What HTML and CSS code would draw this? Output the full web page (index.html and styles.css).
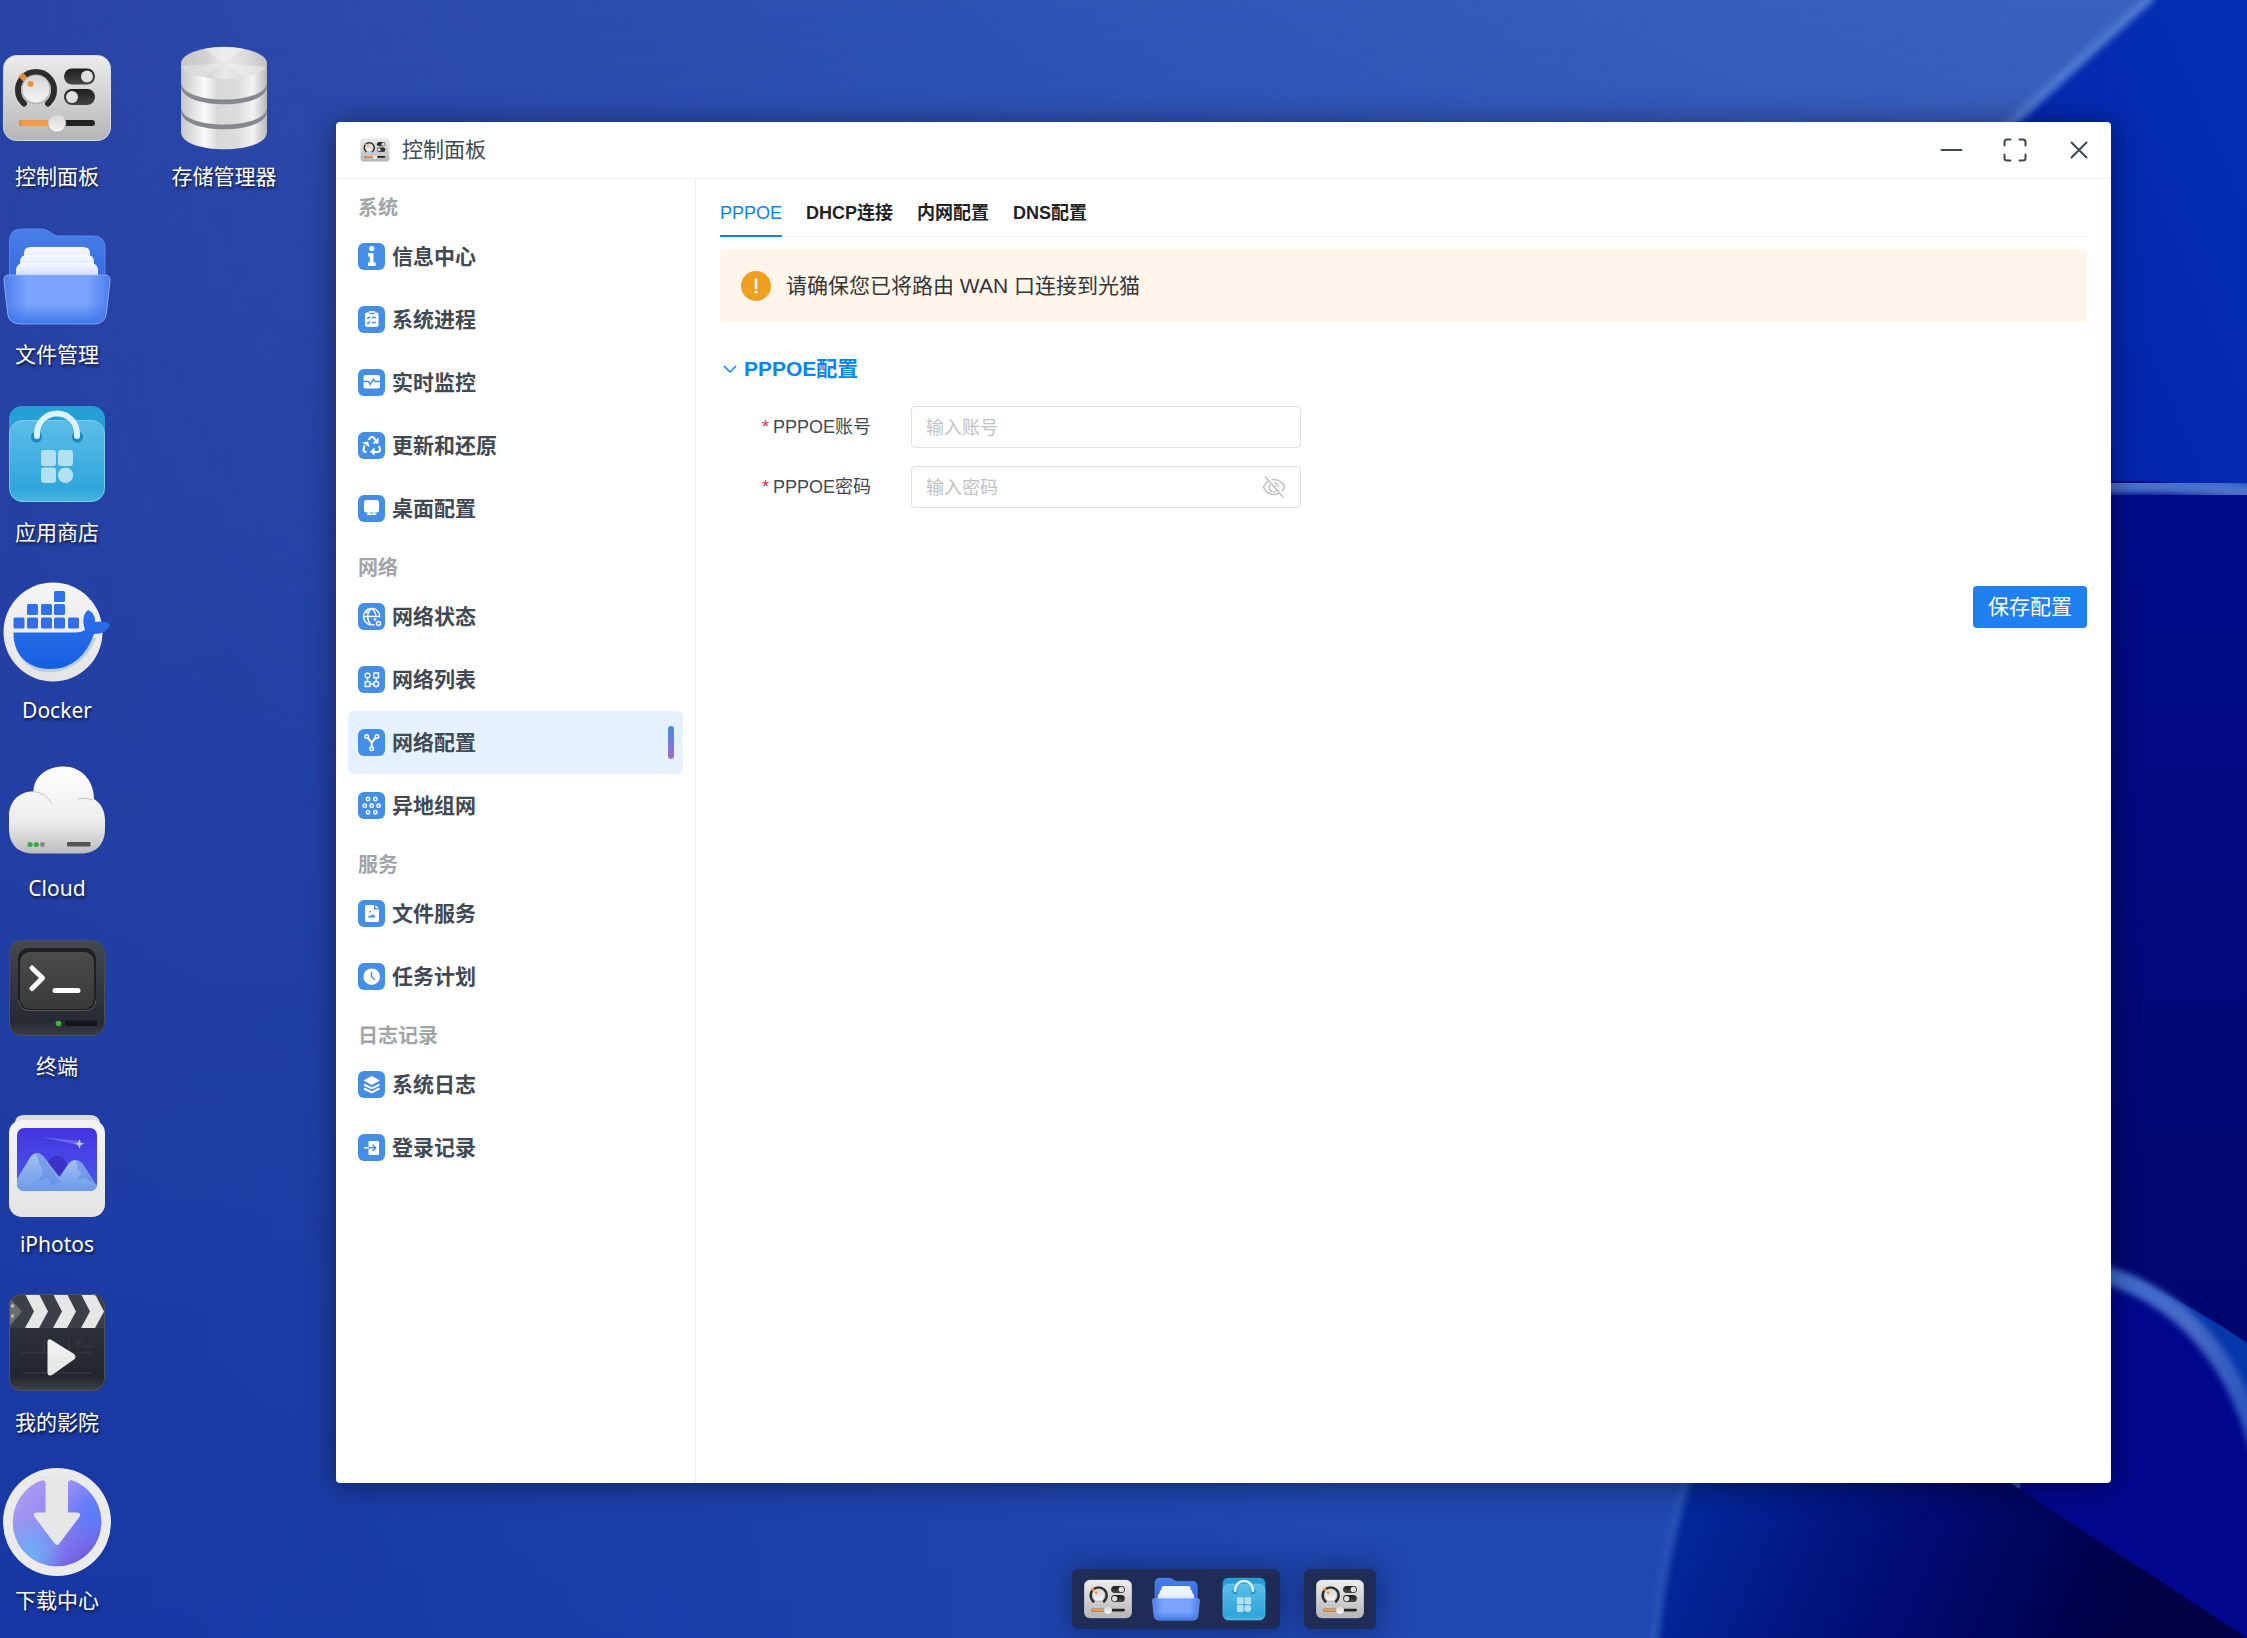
FILE: index.html
```html
<!DOCTYPE html>
<html lang="zh-CN">
<head>
<meta charset="utf-8">
<meta name="viewport" content="width=device-width, initial-scale=1">
<title>控制面板</title>
<link rel="stylesheet" href="styles.css">
</head>
<body>

<svg class="sprite" aria-hidden="true" width="0" height="0">
  <defs>
    <linearGradient id="gSilver" x1="0" y1="0" x2="0" y2="1"><stop offset="0" stop-color="#ececec"/><stop offset=".75" stop-color="#c4c4c4"/><stop offset="1" stop-color="#b4b4b4"/></linearGradient>
    <linearGradient id="gKnob" x1="0" y1="0" x2="0" y2="1"><stop offset="0" stop-color="#d6d6d6"/><stop offset="1" stop-color="#f4f4f4"/></linearGradient>
    <linearGradient id="gDark" x1="0" y1="0" x2="0" y2="1"><stop offset="0" stop-color="#1e1e1e"/><stop offset="1" stop-color="#454545"/></linearGradient>
    <linearGradient id="gDisk" x1="0" y1="0" x2="1" y2="0"><stop offset="0" stop-color="#c6c6c8"/><stop offset=".28" stop-color="#fbfbfb"/><stop offset=".42" stop-color="#d9d9d9"/><stop offset=".65" stop-color="#dcdcde"/><stop offset=".84" stop-color="#f2f2f2"/><stop offset="1" stop-color="#b8b8ba"/></linearGradient>
    <linearGradient id="gDiskTop" x1="0" y1="0" x2="1" y2="0"><stop offset="0" stop-color="#c6c6c6"/><stop offset=".3" stop-color="#d2d2d2"/><stop offset=".5" stop-color="#e9e9e9"/><stop offset=".75" stop-color="#dcdcdc"/><stop offset="1" stop-color="#c2c2c2"/></linearGradient>
    <linearGradient id="gFolderBack" x1="0" y1="0" x2="0" y2="1"><stop offset="0" stop-color="#4a7fe8"/><stop offset="1" stop-color="#2a62dc"/></linearGradient>
    <linearGradient id="gFolderFront" x1="0" y1="0" x2="0" y2="1"><stop offset="0" stop-color="#7ba4fc"/><stop offset=".6" stop-color="#7aa4fd"/><stop offset="1" stop-color="#3f78ee"/></linearGradient>
    <linearGradient id="gFolderSide" x1="0" y1="0" x2="1" y2="0"><stop offset="0" stop-color="#3f74e8" stop-opacity=".8"/><stop offset=".22" stop-color="#3f74e8" stop-opacity="0"/><stop offset=".78" stop-color="#3f74e8" stop-opacity="0"/><stop offset="1" stop-color="#3f74e8" stop-opacity=".8"/></linearGradient>
    <linearGradient id="gPaper" x1="0" y1="0" x2="0" y2="1"><stop offset="0" stop-color="#f7faff"/><stop offset="1" stop-color="#b9cdf8"/></linearGradient>
    <linearGradient id="gBag" x1="0" y1="0" x2="0" y2="1"><stop offset="0" stop-color="#5cbde8"/><stop offset=".85" stop-color="#2ea6dc"/><stop offset="1" stop-color="#4ab6de"/></linearGradient>
    <linearGradient id="gWhite" x1="0" y1="0" x2="0" y2="1"><stop offset="0" stop-color="#f4f4f4"/><stop offset="1" stop-color="#e4e4e4"/></linearGradient>
    <linearGradient id="gWhale" x1="0" y1="0" x2="0" y2="1"><stop offset="0" stop-color="#2f70ee"/><stop offset="1" stop-color="#1560e0"/></linearGradient>
    <linearGradient id="gCloud" x1="0" y1="0" x2="0" y2="1"><stop offset="0" stop-color="#ffffff"/><stop offset=".65" stop-color="#ececec"/><stop offset="1" stop-color="#bcbcbc"/></linearGradient>
    <linearGradient id="gTerm" x1="0" y1="0" x2="0" y2="1"><stop offset="0" stop-color="#45484f"/><stop offset=".85" stop-color="#262a33"/><stop offset="1" stop-color="#3a3c42"/></linearGradient>
    <linearGradient id="gScreen" x1="0" y1="0" x2="0" y2="1"><stop offset="0" stop-color="#4b4b4b"/><stop offset="1" stop-color="#393939"/></linearGradient>
    <linearGradient id="gSky" x1="0" y1="0" x2="0" y2="1"><stop offset="0" stop-color="#4433df"/><stop offset="1" stop-color="#4a5bea"/></linearGradient>
    <linearGradient id="gPeak" x1="0" y1="0" x2="0" y2="1"><stop offset="0" stop-color="#a3c1f5"/><stop offset="1" stop-color="#6b98e8"/></linearGradient>
    <linearGradient id="gClap" x1="0" y1="0" x2="0" y2="1"><stop offset="0" stop-color="#32363f"/><stop offset=".85" stop-color="#22262f"/><stop offset="1" stop-color="#40434a"/></linearGradient>
    <linearGradient id="gDown" x1="0" y1="0" x2="1" y2="1"><stop offset="0" stop-color="#b7a0ef"/><stop offset=".5" stop-color="#8c88f4"/><stop offset="1" stop-color="#6450dc"/></linearGradient>
    <radialGradient id="gDownA" cx=".2" cy=".85" r=".4"><stop offset="0" stop-color="#6cb0f4"/><stop offset="1" stop-color="#6cb0f4" stop-opacity="0"/></radialGradient>
    <radialGradient id="gDownB" cx=".9" cy=".4" r=".4"><stop offset="0" stop-color="#5a7bfc"/><stop offset="1" stop-color="#5a7bfc" stop-opacity="0"/></radialGradient>
    <clipPath id="clipPic"><rect x="14" y="16" width="80" height="63" rx="7"/></clipPath>
    <clipPath id="clipMovie"><rect x="6" y="4" width="96" height="97" rx="12"/></clipPath>
  </defs>

  <symbol id="app-panel" viewBox="0 0 108 108">
    <rect x=".5" y="11.500" width="107" height="85" rx="13" fill="url(#gSilver)" stroke="#d8d8d8"/>
    <path d="M21 59.500A18 18 0 1 1 45 59.500" fill="none" stroke="#2d2d2d" stroke-width="6" stroke-linecap="round"/>
    <path d="M17.500 30.500l5 5" stroke="#ea8c3c" stroke-width="6"/>
    <circle cx="33" cy="45.500" r="15" fill="#b5b5b5"/><circle cx="33" cy="45" r="13.500" fill="url(#gKnob)"/>
    <circle cx="27.500" cy="40" r="3" fill="#ee8f3c"/>
    <rect x="61" y="24.500" width="31" height="16" rx="8" fill="url(#gDark)"/><rect x="61" y="45" width="31" height="16" rx="8" fill="url(#gDark)"/>
    <circle cx="84" cy="32.500" r="6" fill="#e0e0e0"/><circle cx="69" cy="53" r="6" fill="#e0e0e0"/>
    <rect x="16" y="76" width="76" height="6" rx="3" fill="#222"/><rect x="16" y="76" width="36" height="6" rx="3" fill="#f09a4c"/>
    <circle cx="54" cy="79.500" r="9.500" fill="#aaa" opacity=".6"/><circle cx="54" cy="79" r="8.700" fill="url(#gKnob)"/>
  </symbol>

  <symbol id="app-storage" viewBox="0 0 108 108">
    <path d="M11 19v69c0 23 86 23 86 0V19z" fill="url(#gDisk)"/>
    <path d="M11 39c2 22 84 22 86 0v4c-2 23-84 23-86 0zM11 64c2 22 84 22 86 0v4c-2 23-84 23-86 0z" fill="#85888f"/>
    <ellipse cx="54" cy="19" rx="43" ry="16" fill="url(#gDiskTop)"/>
    <path d="M54 19L34 4.800a43 16 0 0 1 40 0z" fill="#f0f0f0" opacity=".6"/><path d="M54 19L11.500 22A43 16 0 0 0 34 33z" fill="#ececec" opacity=".5"/><path d="M54 19L74 33A43 16 0 0 0 96 23z" fill="#f4f4f4" opacity=".5"/>
  </symbol>

  <symbol id="app-folder" viewBox="0 0 108 108">
    <path d="M6.500 19Q6.500 7 18 7H38c9 0 11 7 18 7H90q12 0 12 12V80H6.500z" fill="url(#gFolderBack)" stroke="#5b86e4"/>
    <path d="M21 31q0-6 7-6H80q7 0 7 6V60H21z" fill="url(#gPaper)"/>
    <path d="M17 40q0-7 7-7H84q7 0 7 7V60H17z" fill="url(#gPaper)"/>
    <path d="M13 49q0-8 8-8H87q8 0 8 8V62H13z" fill="url(#gPaper)"/>
    <path d="M1 59Q0 53 6 53H101q7 0 6 6L103.500 91Q102 102 91 102H17Q6 102 4.500 91z" fill="url(#gFolderFront)"/>
    <path d="M1 59Q0 53 6 53H101q7 0 6 6L103.500 91Q102 102 91 102H17Q6 102 4.500 91z" fill="url(#gFolderSide)" stroke="#a3bdf8" stroke-opacity=".7"/>
  </symbol>

  <symbol id="app-store" viewBox="0 0 108 108">
    <rect x="6" y="6" width="96" height="60" rx="13" fill="#259fd6"/>
    <rect x="6.500" y="20.500" width="95" height="81" rx="13" fill="url(#gBag)" stroke="#7ccbec"/>
    <circle cx="33.500" cy="37" r="5.500" fill="#1787bd"/><circle cx="74.500" cy="37" r="5.500" fill="#1787bd"/>
    <path d="M34 37V34a20 20 0 0 1 40 0v3" fill="none" stroke="#1f8fc4" stroke-width="7" stroke-linecap="round" opacity=".5"/>
    <path d="M34 36V33.500a20 20 0 0 1 40 0V36" fill="none" stroke="#dcf3fc" stroke-width="6" stroke-linecap="round"/>
    <g fill="#b3e0f3"><rect x="38" y="50" width="15" height="16" rx="3"/><rect x="55" y="50" width="15" height="16" rx="3"/><rect x="38" y="67.500" width="15" height="15.500" rx="3"/><circle cx="62.500" cy="75.300" r="7.700"/></g>
  </symbol>

  <symbol id="app-docker" viewBox="0 0 108 108">
    <circle cx="50" cy="54" r="49.500" fill="url(#gWhite)"/>
    <path d="M12 60C14 84 30 96 50 94 72 92 86 78 93 60z" fill="#8fb4f4" opacity=".5"/>
    <path d="M10.500 54.500H72q6 0 10-2.500C79 43 80 36 85 32 90 34 92.500 39 92 44 97 43 102 43 107 46 105 53 99 56 91 56 83 78 69 91 47 91 24 91 10 76 10.500 54.500z" fill="url(#gWhale)"/>
    <g fill="#2f6feb"><rect x="51" y="13" width="11" height="11" rx="1.500"/><rect x="24" y="26" width="11" height="11" rx="1.500"/><rect x="38" y="26" width="11" height="11" rx="1.500"/><rect x="51" y="26" width="11" height="11" rx="1.500"/><rect x="10.500" y="39.500" width="11" height="11" rx="1.500"/><rect x="24" y="39.500" width="11" height="11" rx="1.500"/><rect x="38" y="39.500" width="11" height="11" rx="1.500"/><rect x="51" y="39.500" width="11" height="11" rx="1.500"/><rect x="65" y="39.500" width="11" height="11" rx="1.500"/></g>
  </symbol>

  <symbol id="app-cloud" viewBox="0 0 108 108">
    <path d="M30.500 35.500C31 20 44 10.500 60.500 10.500 78 10.500 91 24 91 43c7 4 11 12 11 21v9c0 15-9 24.500-24 24.500H30C15 97.500 6 88 6 73V60c0-14 10-25 24.500-24.500z" fill="url(#gCloud)"/>
    <path d="M30 35.500q13 1 18.500 12M75 43q8-2 15 1" fill="none" stroke="#c4c4c4"/>
    <circle cx="27" cy="88.500" r="2.600" fill="#3aae42"/><circle cx="33.200" cy="88.500" r="2.600" fill="#3aae42"/><circle cx="39.400" cy="88.500" r="2.400" fill="#888"/>
    <rect x="64" y="86" width="23.500" height="4.500" rx="1" fill="#555"/>
  </symbol>

  <symbol id="app-terminal" viewBox="0 0 108 108">
    <rect x="6.500" y="6.500" width="95" height="95" rx="12" fill="url(#gTerm)" stroke="#4c4e54"/>
    <rect x="15" y="14" width="78" height="62" rx="11" fill="#1f1f1f"/><rect x="17" y="18" width="74" height="57" rx="10" fill="url(#gScreen)"/>
    <path d="M15.500 66q1 10.500 11 10.500H82q10 0 11-10.500" fill="none" stroke="#5a5a5a"/>
    <path d="M29 34l10.500 10L29 54.500M52 56.500H75" fill="none" stroke="#fff" stroke-width="5" stroke-linecap="round" stroke-linejoin="round"/>
    <circle cx="55.500" cy="89.500" r="2.800" fill="#3fb73f"/><rect x="62" y="86.500" width="32" height="5.500" rx="1.500" fill="#12151c"/>
  </symbol>

  <symbol id="app-photos" viewBox="0 0 108 108">
    <path d="M12 10q1-7 9-7H87q8 0 10 7l-4 6H16z" fill="#dcdcdc"/>
    <rect x="6" y="8" width="96" height="97" rx="13" fill="url(#gWhite)"/>
    <g clip-path="url(#clipPic)"><rect x="14" y="16" width="80" height="63" fill="url(#gSky)"/><circle cx="54" cy="54" r="10" fill="#3c30c8"/><path d="M38 25l38 4v4z" fill="#8b82f2" opacity=".6"/>
    <path d="M76.500 27l1.300 3.700 3.700 1-3.700 1.300-1.300 3.700-1.300-3.700-3.700-1.300 3.700-1z" fill="#c9c6ff"/>
    <path d="M46 80L66 51q6-6 13 0L98 80z" fill="url(#gPeak)"/><path d="M6 80L28 44q6-6 12 0L68 80z" fill="url(#gPeak)"/><path d="M34 41c-2 5 4 8 2 12 4 0 2 5 4 8l-5 8 9-3 4 7 9-3L40 44q-3-3-6-3zM73 48c-1 4 3 6 1 9l4 4-3 7 7-2 10 6L79 51q-3-3-6-3z" fill="#5a86df" opacity=".5"/></g>
  </symbol>

  <symbol id="app-movie" viewBox="0 0 108 108">
    <g clip-path="url(#clipMovie)"><rect x="6" y="4" width="96" height="97" fill="url(#gClap)"/><rect x="6" y="4" width="96" height="34" fill="#3b3f48"/>
    <path d="M22 4H36L45 21.500 36 38H22L31 21.500zM50 4H64L73 21.500 64 38H50L59 21.500zM78 4H92L101 21.500 92 38H78L87 21.500z" fill="#e6e6e6"/><path d="M6 7L19 21.500 6 37z" fill="#6d6d6d"/><circle cx="9.500" cy="16" r="1.700" fill="#bbb"/><circle cx="9.500" cy="26" r="1.700" fill="#bbb"/></g>
    <path d="M19 63H88M19 83H88M41 49V63M66 49V63M72 52h8M76 52l-2 8M80 57q3-3 4 1 3-4 5-1" fill="none" stroke="#3a3f4b"/>
    <rect x="6.500" y="4.500" width="95" height="96" rx="12" fill="none" stroke="#50535b"/>
    <path d="M44.500 52q0-4 4-2L71 64q3 3 0 5.500L49 85q-4.500 2-4.500-3z" fill="url(#gWhite)"/>
  </symbol>

  <symbol id="app-download" viewBox="0 0 108 108">
    <circle cx="54" cy="54" r="54" fill="#ebebeb"/>
    <circle cx="54" cy="54" r="44.300" fill="url(#gDown)"/><circle cx="54" cy="54" r="44.300" fill="url(#gDownA)"/><circle cx="54" cy="54" r="44.300" fill="url(#gDownB)"/>
    <path d="M36 8H72L65 14V44.500H74q5 .5 2 5L56 76q-2 2-4 0L32 49.500q-3-4.500 2-5h8.500V14z" fill="#e6e6e6"/>
  </symbol>
</svg>

<svg class="wallpaper" viewBox="0 0 2247 1638" preserveAspectRatio="none" aria-hidden="true">
  <defs>
    <linearGradient id="wBase" x1="0" y1="0" x2="0" y2="1"><stop offset="0" stop-color="#2a44a5"/><stop offset=".5" stop-color="#233fa4"/><stop offset="1" stop-color="#1637a3"/></linearGradient>
    <linearGradient id="wLight" x1="0" y1="0" x2="1" y2="0"><stop offset="0" stop-color="#3b60bd" stop-opacity="0"/><stop offset=".9" stop-color="#3b60bd"/></linearGradient>
    <linearGradient id="wMid" x1="0" y1="0" x2="1" y2="0"><stop offset="0" stop-color="#2048b1" stop-opacity="0"/><stop offset=".1" stop-color="#2048b1" stop-opacity=".1"/><stop offset=".6" stop-color="#2048b1"/></linearGradient>
    <linearGradient id="wFade" x1="0" y1="0" x2="0" y2="1"><stop offset="0" stop-color="#fff"/><stop offset=".5" stop-color="#000"/></linearGradient>
    <mask id="wTop"><rect width="2247" height="1638" fill="url(#wFade)"/></mask>
    <linearGradient id="wBlob" x1="0" y1="1" x2="1" y2="0"><stop offset="0" stop-color="#001ba8"/><stop offset="1" stop-color="#0530b4"/></linearGradient>
    <linearGradient id="wDeep" x1="0" y1="0" x2="0" y2="1"><stop offset="0" stop-color="#000b8b"/><stop offset="1" stop-color="#00066a"/></linearGradient>
    <linearGradient id="wFoot" gradientUnits="userSpaceOnUse" x1="1670" y1="1460" x2="2110" y2="1640"><stop offset="0" stop-color="#042c9f"/><stop offset=".55" stop-color="#000a72"/><stop offset="1" stop-color="#000045"/></linearGradient>
    <linearGradient id="wEdge" gradientUnits="userSpaceOnUse" x1="2111" y1="0" x2="2247" y2="0"><stop offset="0" stop-color="#3f6cd0"/><stop offset=".6" stop-color="#4769c6"/><stop offset="1" stop-color="#2a57bd"/></linearGradient>
    <filter id="soft" x="-10%" y="-10%" width="120%" height="120%"><feGaussianBlur stdDeviation="3"/></filter>
  </defs>
  <rect width="2247" height="1638" fill="url(#wBase)"/>
  <rect width="2247" height="1638" fill="url(#wMid)"/>
  <rect width="2247" height="1638" fill="url(#wLight)" mask="url(#wTop)"/>
  <path d="M2150 0Q2075 66 2008 126L1900 300V800H2247V0z" fill="url(#wBlob)"/>
  <path d="M2152-4Q2078 62 2006 128" fill="none" stroke="#4d78cf" stroke-width="10" filter="url(#soft)"/>
  <path d="M2000 490Q2150 470 2247 494V1400H2000z" fill="url(#wDeep)"/>
  <path d="M2050 488Q2170 478 2260 494" fill="none" stroke="#4a71ca" stroke-width="18" filter="url(#soft)"/>
  <path d="M2100 1268Q2170 1290 2247 1343V1450L2100 1300z" fill="#0637ab"/>
  <path d="M2050 1260Q2220 1290 2260 1460V1638H2000z" fill="#00078b"/>
  <path d="M2080 1268Q2216 1296 2258 1446" fill="none" stroke="url(#wEdge)" stroke-width="18" filter="url(#soft)"/>
  <path d="M1694 1460H1975L2247 1638H1655Q1660 1560 1694 1460z" fill="url(#wFoot)"/>
  <path d="M1690 1470Q1662 1555 1654 1645" fill="none" stroke="#2852b5" stroke-width="9" filter="url(#soft)"/>
</svg>

<main class="desktop">
  <nav class="shortcuts" aria-label="桌面">
    <a class="shortcut" href="#panel"><svg class="shortcut-icon"><use href="#app-panel"/></svg><span>控制面板</span></a>
    <a class="shortcut" href="#files"><svg class="shortcut-icon"><use href="#app-folder"/></svg><span>文件管理</span></a>
    <a class="shortcut" href="#store"><svg class="shortcut-icon"><use href="#app-store"/></svg><span>应用商店</span></a>
    <a class="shortcut" href="#docker"><svg class="shortcut-icon"><use href="#app-docker"/></svg><span>Docker</span></a>
    <a class="shortcut" href="#cloud"><svg class="shortcut-icon"><use href="#app-cloud"/></svg><span>Cloud</span></a>
    <a class="shortcut" href="#terminal"><svg class="shortcut-icon"><use href="#app-terminal"/></svg><span>终端</span></a>
    <a class="shortcut" href="#photos"><svg class="shortcut-icon"><use href="#app-photos"/></svg><span>iPhotos</span></a>
    <a class="shortcut" href="#movies"><svg class="shortcut-icon"><use href="#app-movie"/></svg><span>我的影院</span></a>
    <a class="shortcut" href="#downloads"><svg class="shortcut-icon"><use href="#app-download"/></svg><span>下载中心</span></a>
    <a class="shortcut" href="#storage"><svg class="shortcut-icon"><use href="#app-storage"/></svg><span>存储管理器</span></a>
  </nav>

  <section class="window" id="panel" aria-label="控制面板">
    <header class="titlebar">
      <svg class="title-icon" viewBox="0 10 108 88"><use href="#app-panel" width="108" height="108"/></svg>
      <h1 class="title">控制面板</h1>
      <div class="window-controls">
        <button type="button" aria-label="最小化"><svg viewBox="0 0 24 24"><path d="M2.500 12H22.500"/></svg></button>
        <button type="button" aria-label="最大化"><svg viewBox="0 0 24 24"><path d="M1.500 7.500V4Q1.500 1.500 4 1.500H7.500M16.500 1.500H20Q22.500 1.500 22.500 4V7.500M22.500 16.500V20Q22.500 22.500 20 22.500H16.500M7.500 22.500H4Q1.500 22.500 1.500 20V16.500"/></svg></button>
        <button type="button" aria-label="关闭"><svg viewBox="0 0 24 24"><path d="M4.500 4.500l15 15M19.500 4.500l-15 15"/></svg></button>
      </div>
    </header>

    <div class="window-body">
      <nav class="sidebar" aria-label="设置">
        <h2 class="group-title">系统</h2>
        <a class="item" href="#info"><svg class="item-icon" viewBox="0 0 27 27"><circle cx="13.700" cy="5.500" r="2.600"/><path d="M10.200 10h5.300v9.500h2.200V23H10v-3.500h1.800v-6H10.200z"/></svg>信息中心</a>
        <a class="item" href="#process"><svg class="item-icon" viewBox="0 0 27 27"><path d="M9 6.500h2V5h6v1.500h1.500Q20.500 6.500 20.500 8.500V19q0 2-2 2H9q-2 0-2-2V8.500q0-2 2-2z"/><path class="cut" d="M11.500 7.500h5M9 11.500l1 1 1.800-2M14 11.500h4M9 16.500l1 1 1.800-2M14 16.500h4"/></svg>系统进程</a>
        <a class="item" href="#monitor"><svg class="item-icon" viewBox="0 0 27 27"><rect x="5.500" y="6" width="16.500" height="13.500" rx="2"/><path class="cut" d="M5 12.500h5.500l1.500 3 3.500-5.500 1.500 2.500H22"/></svg>实时监控</a>
        <a class="item" href="#update"><svg class="item-icon" viewBox="0 0 27 27"><path class="line bold" d="M10.500 8l2-2.500q1.500-1 3 0L18 9M6.500 13.500l-1 4q0 2.500 3 2.500M21 14l1 3q.5 3-3 3h-4"/><path d="M20.500 5.500v6h-6zM4 10.500l6-1 1.500 5.500zM16.500 15.500v8l-4.500-3.700z"/></svg>更新和还原</a>
        <a class="item" href="#desktop"><svg class="item-icon" viewBox="0 0 27 27"><rect x="6" y="5" width="15" height="12.500" rx="2.500"/><path class="line" d="M11 17v2.500M16 17v2.500M9 19.300h9.500"/></svg>桌面配置</a>

        <h2 class="group-title">网络</h2>
        <a class="item" href="#net-status"><svg class="item-icon" viewBox="0 0 27 27"><path class="line" d="M16.500 21.300A8.200 8.200 0 1 1 21.800 14M5.500 13.500H22M13.500 5.500c-6 5-4 13-.5 16.300M13.500 5.500c4 3 4.500 6 4.500 8.500"/><circle class="line" cx="20.500" cy="20.500" r="2"/><circle cx="17" cy="16.500" r="1.300"/><circle cx="8.500" cy="9" r="1.300"/></svg>网络状态</a>
        <a class="item" href="#net-list"><svg class="item-icon" viewBox="0 0 27 27"><circle class="line" cx="9.500" cy="9.500" r="2.400"/><rect class="line" x="15.800" y="7" width="4.700" height="4.700"/><rect class="line" x="7.200" y="15.800" width="4.700" height="4.700"/><circle class="line" cx="18.200" cy="18" r="2.500"/><path class="line" d="M9.500 12v4M18.200 12v3.500M12 18h3.500"/></svg>网络列表</a>
        <a class="item active" href="#net-config" aria-current="page"><svg class="item-icon" viewBox="0 0 27 27"><path class="line bold" d="M9.800 9l4 4.500 3.700-4.500M13.700 13v5"/><circle class="line" cx="8.700" cy="7.500" r="1.800"/><circle class="line" cx="19" cy="7.500" r="1.800"/><circle class="line" cx="13.700" cy="19.800" r="1.800"/></svg>网络配置</a>
        <a class="item" href="#vpn"><svg class="item-icon" viewBox="0 0 27 27"><g class="line"><circle cx="10" cy="7" r="1.700"/><circle cx="17.300" cy="7" r="1.700"/><circle cx="6.800" cy="13.700" r="1.700"/><circle cx="13.700" cy="13.700" r="1.700"/><circle cx="20.500" cy="13.700" r="1.700"/><circle cx="10" cy="20.300" r="1.700"/><circle cx="17.300" cy="20.300" r="1.700"/></g></svg>异地组网</a>

        <h2 class="group-title">服务</h2>
        <a class="item" href="#file-service"><svg class="item-icon" viewBox="0 0 27 27"><path d="M8.500 5H16v4.500h5V20.500Q21 22 19.500 22H8.500Q7 22 7 20.500V6.500Q7 5 8.500 5zM17.500 5L21 8.300H17.500z"/><path class="hole" d="M10 17.500q1-3 3-1.500 2-4 4.500 1.500zM11.500 11h1.500v1.500h-1.500z"/></svg>文件服务</a>
        <a class="item" href="#schedule"><svg class="item-icon" viewBox="0 0 27 27"><circle cx="13.700" cy="13.700" r="8.300"/><path class="cut" d="M13.500 9v4.700l3.500 3"/></svg>任务计划</a>

        <h2 class="group-title">日志记录</h2>
        <a class="item" href="#system-log"><svg class="item-icon" viewBox="0 0 27 27"><path d="M13.700 5L22 9.500 13.700 14 5.500 9.500z"/><path class="line bold" d="M6 13.700l7.700 3.800 7.800-3.800M6 17.500l7.700 3.800 7.800-3.800"/></svg>系统日志</a>
        <a class="item" href="#login-log"><svg class="item-icon" viewBox="0 0 27 27"><rect x="10.500" y="7" width="10.500" height="14" rx="1"/><path class="line" d="M6 13.700h5"/><path class="cut" d="M10.500 13.700h7M14.500 10.500l3.200 3.200-3.200 3.200"/></svg>登录记录</a>
      </nav>

      <div class="content">
        <div class="tabs" role="tablist">
          <button class="tab selected" type="button" role="tab" aria-selected="true">PPPOE</button>
          <button class="tab" type="button" role="tab" aria-selected="false">DHCP连接</button>
          <button class="tab" type="button" role="tab" aria-selected="false">内网配置</button>
          <button class="tab" type="button" role="tab" aria-selected="false">DNS配置</button>
        </div>

        <div class="alert" role="alert">
          <svg viewBox="0 0 30 30" aria-hidden="true"><circle cx="15" cy="15" r="15" fill="#f0a020"/><path d="M15 8.500v8.500" stroke="#fff" stroke-width="2.500" stroke-linecap="round"/><circle cx="15" cy="21" r="1.600" fill="#fff"/></svg>
          <p>请确保您已将路由 WAN 口连接到光猫</p>
        </div>

        <form class="config">
          <button class="collapse" type="button" aria-expanded="true"><svg viewBox="0 0 14 14" aria-hidden="true"><path d="M1 4l6 6 6-6"/></svg>PPPOE配置</button>
          <div class="fields">
            <label for="account"><span class="required">*</span>PPPOE账号</label>
            <div class="field"><input id="account" type="text" placeholder="输入账号"></div>
            <label for="password"><span class="required">*</span>PPPOE密码</label>
            <div class="field"><input id="password" type="password" placeholder="输入密码"><button class="eye" type="button" aria-label="显示密码"><svg viewBox="0 0 24 24"><path d="M6.500 6.200C3.500 8 2 10.300 1.500 12c1 3.500 5 7.500 10.500 7.500 2 0 3.700-.5 5.200-1.300M9.500 4.800C10.300 4.600 11 4.500 12 4.500c5.500 0 9.500 4 10.500 7.500-.4 1.400-1.300 3-2.800 4.400M8.500 9.500a4.200 4.200 0 0 0 6 6M12 7.800a4.200 4.200 0 0 1 4.200 4.200M12.500 10.500q1 .3 1.200 1.200M3 1.500L21.500 22.500"/></svg></button></div>
          </div>
          <button class="save" type="submit">保存配置</button>
        </form>
      </div>
    </div>
  </section>

  <footer class="dock">
    <div class="dock-group">
      <button type="button" aria-label="控制面板"><svg><use href="#app-panel"/></svg></button>
      <button type="button" aria-label="文件管理"><svg><use href="#app-folder"/></svg></button>
      <button type="button" aria-label="应用商店"><svg><use href="#app-store"/></svg></button>
    </div>
    <div class="dock-group">
      <button type="button" aria-label="控制面板"><svg><use href="#app-panel"/></svg></button>
    </div>
  </footer>
</main>
</body>
</html>
```

FILE: styles.css
```css
* {
  box-sizing: border-box;
}

body {
  margin: 0;
  height: 100vh;
  overflow: hidden;
  background: #213da4;
  font-family: "Liberation Sans", "Noto Sans CJK SC", sans-serif;
  line-height: 1.5;
  color: #404954;
}

h1,
h2,
p {
  margin: 0;
}

button {
  margin: 0;
  padding: 0;
  border: 0;
  background: none;
  color: inherit;
  font: inherit;
  cursor: pointer;
}

a {
  color: inherit;
  text-decoration: none;
}

svg {
  display: block;
  flex: none;
}

.sprite {
  position: absolute;
}

.wallpaper {
  position: absolute;
  inset: 0;
  width: 100%;
  height: 100%;
}

.desktop {
  position: relative;
  height: 100%;
}

/* Desktop shortcuts fill a column, then wrap to the next one */
.shortcuts {
  display: flex;
  flex-flow: column wrap;
  align-content: flex-start;
  gap: 31px 53px;
  height: 100%;
  padding-top: 44px;
}

.shortcut {
  display: flex;
  flex-direction: column;
  align-items: center;
  gap: 9px;
  width: 114px;
  color: #fff;
  font: 21px/30px "Noto Sans", "Noto Sans CJK SC", sans-serif;
  white-space: nowrap;
  text-shadow: 1px 2px 3px rgba(0, 0, 0, .7);
}

.shortcut-icon {
  width: 108px;
  height: 108px;
}

/* Window */
.window {
  position: absolute;
  inset: 122px 136px 155px 336px;
  display: flex;
  flex-direction: column;
  border-radius: 4px;
  background: #fff;
  box-shadow: 0 2px 30px rgba(0, 0, 0, .45);
  overflow: hidden;
}

.titlebar {
  display: flex;
  align-items: center;
  height: 57px;
  padding: 0 20px 1px 24px;
  border-bottom: 1px solid #efeff0;
}

.title-icon {
  width: 30px;
  height: 24px;
}

.title {
  margin-left: 12px;
  font-size: 21px;
  font-weight: 400;
}

.window-controls {
  display: flex;
  gap: 40px;
  margin-left: auto;
}

.window-controls svg {
  width: 24px;
  height: 24px;
  fill: none;
  stroke: #3f4854;
  stroke-width: 2;
  stroke-linecap: round;
}

.window-body {
  flex: 1;
  display: flex;
  min-height: 0;
}

/* Sidebar */
.sidebar {
  flex: none;
  width: 360px;
  padding: 1px 12px;
  border-right: 1px solid #efeff0;
}

.group-title {
  height: 45px;
  padding: 10px 10px 0;
  color: #a0a5aa;
  font-size: 20px;
  line-height: 37px;
}

.item {
  display: flex;
  align-items: center;
  gap: 7px;
  height: 63px;
  padding: 0 9px 0 10px;
  border-radius: 6px;
  font-size: 21px;
  font-weight: 700;
}

.item.active {
  background: #e5f1fd;
}

.item.active::after {
  content: "";
  width: 6px;
  height: 33px;
  margin-left: auto;
  border-radius: 3px;
  background: linear-gradient(#3f8fdc, #ab68ca);
}

.item-icon {
  width: 27px;
  height: 27px;
  border-radius: 6px;
  background: #458ee6;
  fill: #fff;
}

.item-icon .line {
  fill: none;
  stroke: #fff;
  stroke-width: 1.4;
}

.item-icon .bold {
  stroke-width: 2;
}

.item-icon .cut {
  fill: none;
  stroke: #458ee6;
  stroke-width: 1.4;
}

.item-icon .hole {
  fill: #458ee6;
}

/* Content */
.content {
  flex: 1;
  min-width: 0;
  padding: 12px 24px 24px;
}

.tabs {
  display: flex;
  gap: 24px;
  height: 46px;
  border-bottom: 1px solid #efeff0;
}

.tab {
  height: 46px;
  border-bottom: 2px solid transparent;
  color: #1f2225;
  font-size: 18px;
  font-weight: 700;
}

.tab.selected {
  border-color: #0b84f3;
  color: #0b84f3;
  font-weight: 400;
}

.alert {
  display: flex;
  align-items: center;
  gap: 15px;
  height: 73px;
  margin-top: 12px;
  padding: 0 21px;
  border-radius: 4px;
  background: #fff5eb;
  color: #333639;
  font-size: 21px;
}

.alert svg {
  width: 30px;
  height: 30px;
}

.config {
  display: flex;
  flex-direction: column;
  align-items: flex-start;
  padding-top: 32px;
}

.collapse {
  display: flex;
  align-items: center;
  gap: 7px;
  height: 30px;
  padding-left: 3px;
  color: #0b84f3;
  font-size: 21px;
  font-weight: 700;
}

.collapse svg {
  width: 14px;
  height: 14px;
  fill: none;
  stroke: currentColor;
  stroke-width: 1.5;
}

.fields {
  display: grid;
  grid-template-columns: 151px 390px;
  grid-auto-rows: 42px;
  gap: 18px 40px;
  align-items: center;
  margin-top: 22px;
  font-size: 18px;
}

.fields label {
  text-align: right;
}

.required {
  margin-right: 4px;
  color: #d03050;
}

.field {
  display: flex;
  align-items: center;
  height: 42px;
  padding: 0 14px;
  border: 1px solid #e0e0e6;
  border-radius: 4px;
}

.field input {
  flex: 1;
  min-width: 0;
  padding: 2px 0 0;
  border: 0;
  outline: 0;
  background: none;
  font: inherit;
}

.field input::placeholder {
  color: #c2c2c2;
}

.eye svg {
  width: 24px;
  height: 24px;
  fill: none;
  stroke: #c2c2c2;
  stroke-width: 1.5;
}

.save {
  align-self: flex-end;
  height: 42px;
  margin-top: 78px;
  padding: 0 15px;
  border-radius: 4px;
  background: #2080f0;
  color: #fff;
  font-size: 21px;
}

/* Dock, centred under the window */
.dock {
  position: absolute;
  right: 0;
  bottom: 9px;
  left: 200px;
  display: flex;
  justify-content: center;
  gap: 24px;
}

.dock-group {
  display: flex;
  align-items: center;
  gap: 20px;
  height: 60px;
  padding: 0 12px;
  border-radius: 6px;
  background: #1f2c58;
  box-shadow: 0 0 30px rgba(10, 20, 70, .6);
}

.dock-group svg {
  width: 48px;
  height: 48px;
}
```
